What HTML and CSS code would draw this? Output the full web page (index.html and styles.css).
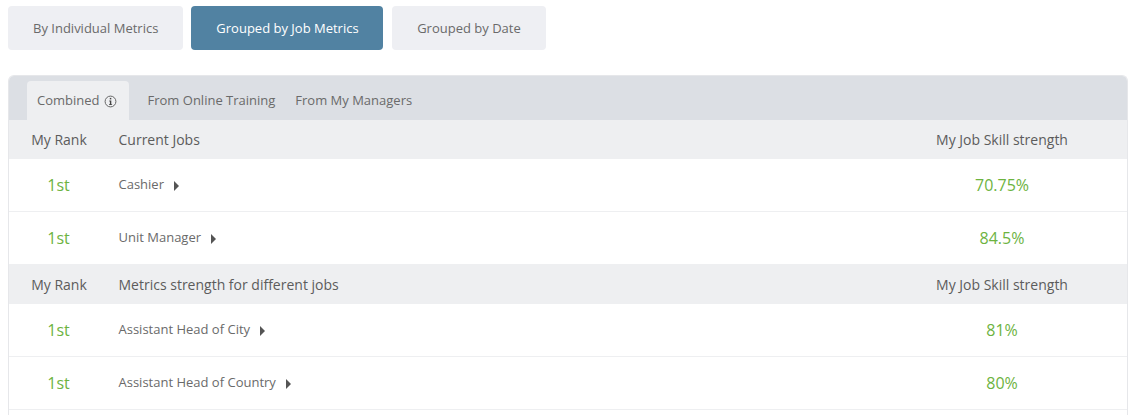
FILE: index.html
```html
<!DOCTYPE html>
<html lang="en">
<head>
    <meta charset="UTF-8">
    <title>Job Metrics</title>
    <link rel="stylesheet" href="styles.css">
</head>
<body>
    <div class="view-tabs">
        <a class="view-tab">By Individual Metrics</a>
        <a class="view-tab active">Grouped by Job Metrics</a>
        <a class="view-tab">Grouped by Date</a>
    </div>

    <div class="panel">
        <div class="source-tabs">
            <a class="source-tab active">Combined
                <svg class="info" width="13" height="13" viewBox="0 0 13 13"><circle cx="6.5" cy="6.5" r="5.4" fill="none" stroke="#666" stroke-width="1"/><path d="M5.3 5.6h2v3.6h.8v.9H5v-.9h.9V6.5h-.6z" fill="#444"/><rect x="5.8" y="2.9" width="1.5" height="1.5" fill="#444"/></svg>
            </a>
            <a class="source-tab">From Online Training</a>
            <a class="source-tab">From My Managers</a>
        </div>

        <div class="row head">
            <div class="rank">My Rank</div>
            <div class="name">Current Jobs</div>
            <div class="strength">My Job Skill strength</div>
        </div>
        <div class="row">
            <div class="rank">1st</div>
            <div class="name">Cashier <span class="arrow"></span></div>
            <div class="strength">70.75%</div>
        </div>
        <div class="row">
            <div class="rank">1st</div>
            <div class="name">Unit Manager <span class="arrow"></span></div>
            <div class="strength">84.5%</div>
        </div>

        <div class="row head">
            <div class="rank">My Rank</div>
            <div class="name">Metrics strength for different jobs</div>
            <div class="strength">My Job Skill strength</div>
        </div>
        <div class="row">
            <div class="rank">1st</div>
            <div class="name">Assistant Head of City <span class="arrow"></span></div>
            <div class="strength">81%</div>
        </div>
        <div class="row">
            <div class="rank">1st</div>
            <div class="name">Assistant Head of Country <span class="arrow"></span></div>
            <div class="strength">80%</div>
        </div>
    </div>
</body>
</html>
```

FILE: styles.css
```css
html, body {
    height: 100%;
    overflow: hidden;
}
body {
    display: flex;
    flex-direction: column;
    margin: 0;
    padding: 6px 7px 0 8px;
    box-sizing: border-box;
    font-family: 'Open Sans', sans-serif;
    font-size: 13px;
    color: #6a6a6a;
    background: #fff;
}
.view-tabs {
    display: flex;
    gap: 8px;
    height: 44px;
    margin-bottom: 25px;
}
.view-tab {
    display: flex;
    align-items: center;
    justify-content: center;
    padding: 0 25px;
    background: #eeeff3;
    border-radius: 4px;
}
.view-tab.active {
    margin-right: 1px;
    padding: 0 24.5px 0 25px;
    background: #5182a2;
    color: #fff;
    font-weight: 500;
}
.panel {
    flex: 1;
    border: 1px solid #e6e7ea;
    border-bottom: none;
    border-radius: 6px 6px 0 0;
    overflow: hidden;
}
.source-tabs {
    display: flex;
    height: 39px;
    padding: 5px 0 0 18px;
    background: #dcdfe4;
}
.source-tab {
    display: flex;
    align-items: center;
    padding: 0 10px 2px;
}
.source-tab.active {
    margin-right: 9px;
    padding-right: 12px;
    background: #eeeff1;
    border-radius: 4px 4px 0 0;
}
.info {
    margin-left: 4px;
    margin-top: 3px;
}
.row {
    display: flex;
    align-items: center;
    height: 52px;
    border-bottom: 1px solid #eeeff1;
}
.row.head {
    height: 39px;
    background: #eeeff1;
    border-bottom: none;
    font-size: 14px;
    font-weight: 500;
}
.rank {
    width: 99px;
    padding-right: 1px;
    text-align: center;
    font-size: 16px;
    color: #6db33f;
}
.name {
    flex: 1;
    padding: 0 0 2px 9.5px;
}
.head .name {
    padding-bottom: 0;
    color: #5c5c5c;
}
.strength {
    width: 250px;
    text-align: center;
    font-size: 16px;
    color: #6db33f;
}
.head .rank, .head .strength {
    width: 100px;
    padding-right: 0;
    font-size: 14px;
    color: #5c5c5c;
}
.head .strength {
    width: 250px;
}
.arrow {
    display: inline-block;
    margin-left: 7px;
    border-left: 5px solid #555;
    border-top: 5px solid transparent;
    border-bottom: 5px solid transparent;
    vertical-align: -2px;
}
```
